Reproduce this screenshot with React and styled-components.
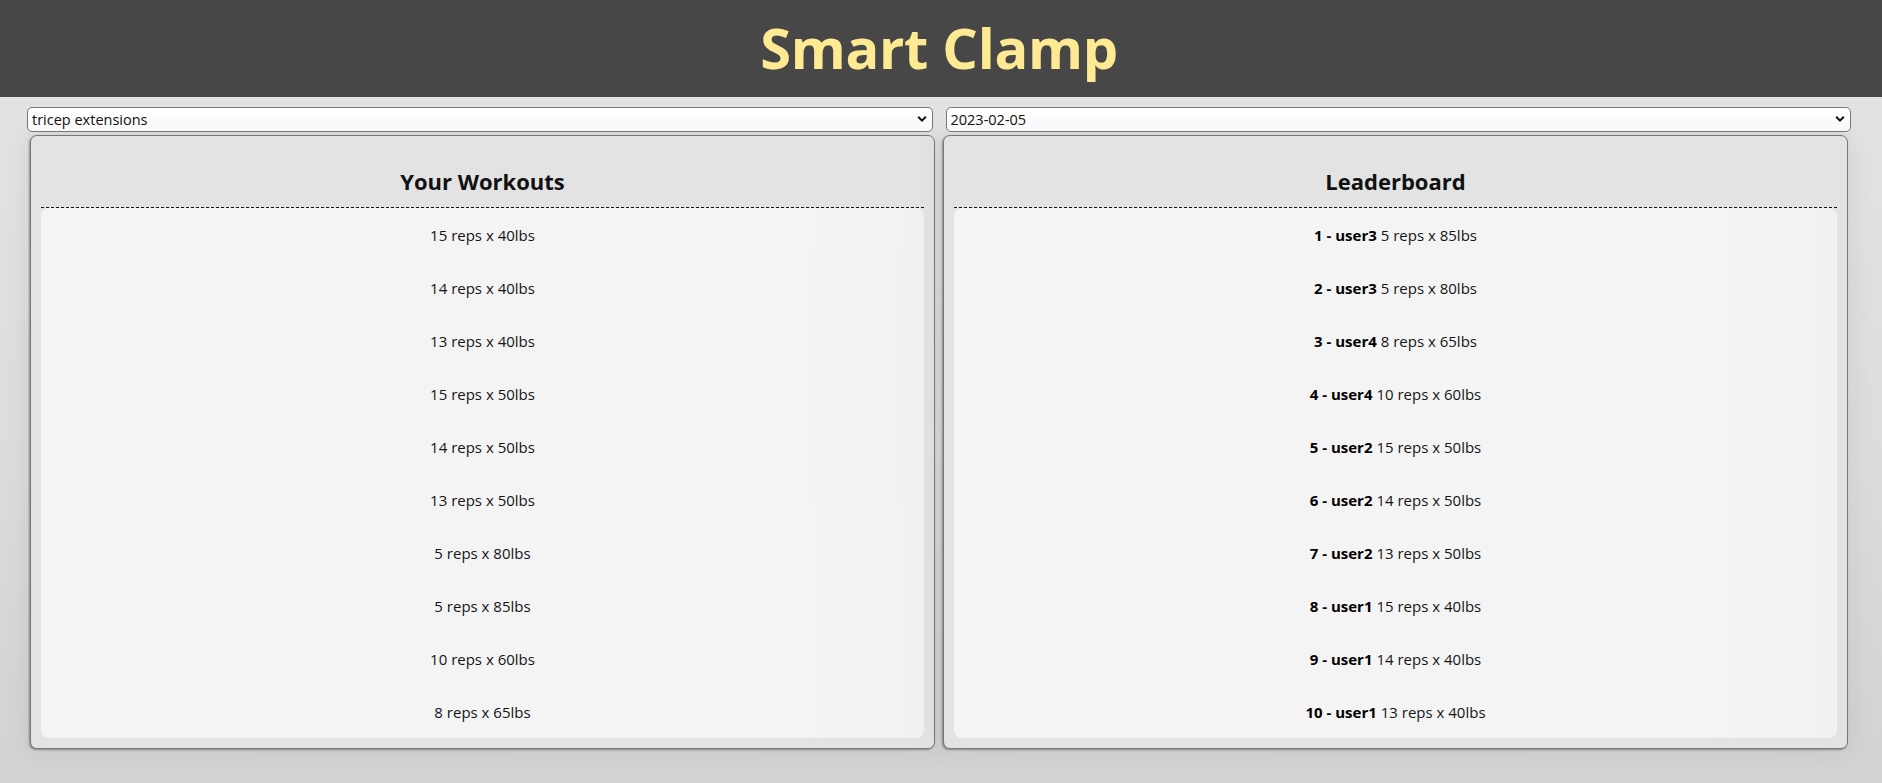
import styled, { createGlobalStyle } from "styled-components";

const GlobalStyle = createGlobalStyle`
  html, body { margin: 0; padding: 0; }
  body {
    font-family: "Open Sans", "Noto Sans", sans-serif;
    color: #111;
    background: linear-gradient(180deg, #e4e4e4 0%, #dcdcdc 60%, #d2d2d2 100%);
    min-height: 100vh;
  }
`;

const workouts = [
  "15 reps x 40lbs",
  "14 reps x 40lbs",
  "13 reps x 40lbs",
  "15 reps x 50lbs",
  "14 reps x 50lbs",
  "13 reps x 50lbs",
  "5 reps x 80lbs",
  "5 reps x 85lbs",
  "10 reps x 60lbs",
  "8 reps x 65lbs",
];

const leaders = [
  ["1 - user3", "5 reps x 85lbs"],
  ["2 - user3", "5 reps x 80lbs"],
  ["3 - user4", "8 reps x 65lbs"],
  ["4 - user4", "10 reps x 60lbs"],
  ["5 - user2", "15 reps x 50lbs"],
  ["6 - user2", "14 reps x 50lbs"],
  ["7 - user2", "13 reps x 50lbs"],
  ["8 - user1", "15 reps x 40lbs"],
  ["9 - user1", "14 reps x 40lbs"],
  ["10 - user1", "13 reps x 40lbs"],
];

const Page = styled.div`
  min-height: 100vh;
  display: flex;
  flex-direction: column;
`;

const TopBar = styled.header`
  height: 97px;
  background: #474747;
  display: flex;
  align-items: center;
  justify-content: center;
`;

const AppName = styled.h1`
  margin: 0;
  font-size: 56px;
  font-weight: 700;
  color: #ffea94;
  line-height: 1;
  letter-spacing: -0.3px;
  transform: translate(-2px, -2px);
`;

const Controls = styled.div`
  display: flex;
  gap: 13px;
  padding: 10px 31px 0 27px;
`;

const SelectWrap = styled.div`
  position: relative;
  flex: 1;
`;

const Select = styled.select`
  appearance: none;
  width: 100%;
  height: 25px;
  padding: 0 24px 0 4px;
  border: 1px solid #767676;
  border-radius: 5px;
  background: linear-gradient(180deg, #ffffff, #f8f8f8);
  font-family: "Open Sans", "Noto Sans", sans-serif;
  font-size: 14.5px;
  color: #111;
  outline: none;
`;

const Chevron = styled.svg`
  position: absolute;
  right: 6px;
  top: 8px;
  width: 10px;
  height: 8px;
  pointer-events: none;
`;

const Columns = styled.div`
  display: flex;
  gap: 8px;
  padding: 3px 34px 0 30px;
`;

const Panel = styled.section`
  flex: 1;
  background: #e3e3e3;
  border: 1px solid #777;
  border-radius: 7px;
  padding: 0 10px 10px;
  box-shadow: -1px 1px 2px rgba(0, 0, 0, 0.35), 0 0 28px rgba(0, 0, 0, 0.08);
`;

const PanelTitle = styled.h2`
  margin: 0;
  height: 72px;
  box-sizing: border-box;
  padding-top: 30px;
  text-align: center;
  font-size: 22px;
  font-weight: 700;
  line-height: 30px;
  border-bottom: 1px dashed #111;
`;

const List = styled.div`
  background: linear-gradient(90deg, #f4f4f4 85%, #f1f1f1 100%);
  border-radius: 8px;
`;

const Row = styled.p`
  margin: 0;
  padding: 17px 0 15px;
  height: 21px;
  line-height: 21px;
  text-align: center;
  font-size: 15px;
  color: #151515;
`;

const Rank = styled.b`
  font-weight: 700;
  color: #000;
`;

const Arrow = () => (
  <Chevron viewBox="0 0 10 8">
    <path d="M1.2 1.8 L5 5.6 L8.8 1.8" fill="none" stroke="#111" strokeWidth="2" />
  </Chevron>
);

export default function App() {
  return (
    <Page>
      <GlobalStyle />
      <TopBar>
        <AppName>Smart Clamp</AppName>
      </TopBar>
      <Controls>
        <SelectWrap>
          <Select defaultValue="tricep extensions">
            <option>tricep extensions</option>
          </Select>
          <Arrow />
        </SelectWrap>
        <SelectWrap>
          <Select defaultValue="2023-02-05">
            <option>2023-02-05</option>
          </Select>
          <Arrow />
        </SelectWrap>
      </Controls>
      <Columns>
        <Panel>
          <PanelTitle>Your Workouts</PanelTitle>
          <List>
            {workouts.map((w, i) => (
              <Row key={i}>{w}</Row>
            ))}
          </List>
        </Panel>
        <Panel>
          <PanelTitle>Leaderboard</PanelTitle>
          <List>
            {leaders.map(([rank, w], i) => (
              <Row key={i}>
                <Rank>{rank}</Rank> {w}
              </Row>
            ))}
          </List>
        </Panel>
      </Columns>
    </Page>
  );
}
